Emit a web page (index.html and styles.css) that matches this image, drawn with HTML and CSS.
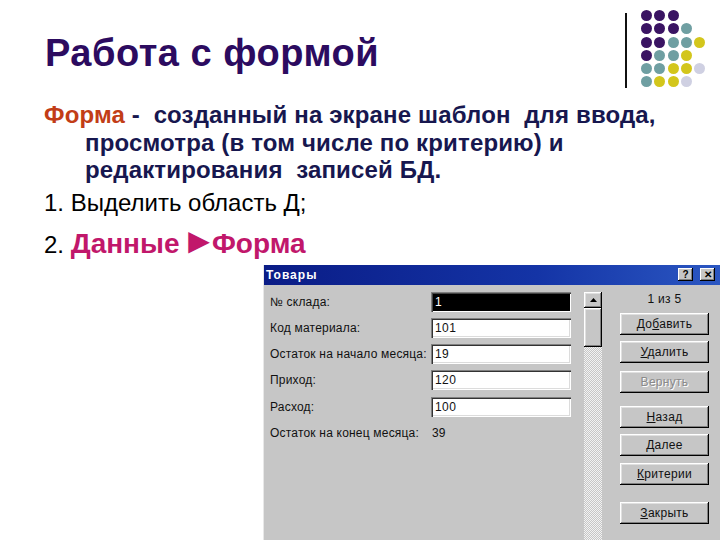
FILE: index.html
```html
<!DOCTYPE html>
<html lang="ru">
<head>
<meta charset="utf-8">
<title>Работа с формой</title>
<link rel="stylesheet" href="styles.css">
</head>
<body>
<div class="slide">
  <header class="head">
    <h1 class="title">Работа с формой</h1>
    <div class="deco">
      <div class="deco-line"></div>
      <div class="dots">
        <span class="d p"></span><span class="d p"></span><span class="d p"></span><span class="d n"></span><span class="d n"></span>
        <span class="d p"></span><span class="d p"></span><span class="d p"></span><span class="d t"></span><span class="d n"></span>
        <span class="d p"></span><span class="d p"></span><span class="d t"></span><span class="d t"></span><span class="d y"></span>
        <span class="d p"></span><span class="d t"></span><span class="d t"></span><span class="d y"></span><span class="d n"></span>
        <span class="d t"></span><span class="d t"></span><span class="d y"></span><span class="d y"></span><span class="d l"></span>
        <span class="d t"></span><span class="d y"></span><span class="d y"></span><span class="d l"></span><span class="d n"></span>
      </div>
    </div>
  </header>

  <p class="def"><span class="line1"><span class="term">Форма</span> -&nbsp; созданный на экране шаблон&nbsp; для ввода,</span> <span class="cont">просмотра (в том числе по критерию) и редактирования&nbsp; записей БД.</span></p>
  <p class="step s1">1. Выделить область Д;</p>
  <p class="step s2">2. <span class="menu">Данные <span class="arr">►</span>Форма</span></p>

  <div class="dialog">
    <div class="titlebar">
      <span class="caption">Товары</span>
      <span class="tb-btns">
        <span class="tb-btn">?</span>
        <span class="tb-btn tb-close">✕</span>
      </span>
    </div>
    <div class="dlg-body">
      <div class="fields">
        <label class="lbl">№ склада:</label><span class="inp sel">1</span>
        <label class="lbl">Код материала:</label><span class="inp">101</span>
        <label class="lbl">Остаток на начало месяца:</label><span class="inp">19</span>
        <label class="lbl">Приход:</label><span class="inp">120</span>
        <label class="lbl">Расход:</label><span class="inp">100</span>
        <label class="lbl">Остаток на конец месяца:</label><span class="val">39</span>
      </div>
      <div class="scroll">
        <div class="sb-up"><svg width="7" height="4" viewBox="0 0 7 4"><path d="M0 4 L3.5 0 L7 4 Z" fill="#000"/></svg></div>
        <div class="sb-thumb"></div>
        <div class="sb-track"></div>
      </div>
      <div class="actions">
        <div class="counter">1 из 5</div>
        <div class="btn">До<u>б</u>авить</div>
        <div class="btn"><u>У</u>далить</div>
        <div class="btn dis">Вернуть</div>
        <div class="btn"><u>Н</u>азад</div>
        <div class="btn"><u>Д</u>алее</div>
        <div class="btn"><u>К</u>ритерии</div>
        <div class="btn"><u>З</u>акрыть</div>
      </div>
    </div>
  </div>
</div>
</body>
</html>
```
FILE: styles.css
```css
* { box-sizing: border-box; }
html, body { margin: 0; padding: 0; background: #fff; }
.slide {
  width: 720px; height: 540px; overflow: hidden; background: #fff;
  font-family: "Liberation Sans", Arial, sans-serif;
  display: flex; flex-direction: column;
}
.head { display: flex; align-items: flex-start; padding: 10px 0 0 45px; height: 101px; flex: none; }
.title {
  margin: 21px 0 0 0; font-size: 38px; line-height: 44px; font-weight: bold; color: #2c0b60;
  letter-spacing: 0.5px;
}
.deco { margin-left: auto; margin-right: 15px; display: flex; align-items: flex-start; }
.deco-line { width: 2px; height: 75px; background: #111; margin: 3px 14px 0 0; }
.dots { display: grid; grid-template-columns: repeat(5, 11px); grid-auto-rows: 11px; gap: 2.3px 2.2px; }
.d { border-radius: 50%; }
.d.p { background: #3a1463; }
.d.t { background: #6f9fa2; }
.d.y { background: #d3c61c; }
.d.l { background: #cfd0e2; }
.d.n { background: transparent; }

.def {
  margin: 0; padding: 0 20px 0 44px; flex: none;
  font-size: 24px; line-height: 27.5px; font-weight: bold; color: #17174f; letter-spacing: 0.15px;
}
.line1 { display: block; white-space: nowrap; }
.cont { display: block; padding-left: 41px; }
.term { color: #c23d17; }
.step { margin: 0 0 0 44px; font-size: 24px; color: #000; flex: none; }
.s1 { margin-top: 5px; line-height: 28px; height: 28px; }
.s2 { margin-top: 9px; line-height: 30px; height: 30px; }
.menu { font-weight: bold; color: #c1176b; font-size: 28px; line-height: 30px; word-spacing: -6px; }
.arr { font-family: "Liberation Sans", Arial, sans-serif; font-size: 36px; font-weight: normal; line-height: 30px; letter-spacing: -5px; word-spacing: 0; }

.dialog {
  margin: 9px 0 0 263px; flex: 1; background: #c6c6c6;
  font-family: "Liberation Sans", Arial, sans-serif; font-size: 12px; color: #111;
  border-left: 1px solid #e8e8e8;
  display: flex; flex-direction: column;
}
.titlebar {
  height: 20px; display: flex; align-items: center; padding: 0 0 0 2px; flex: none;
  background: linear-gradient(90deg, #0a1c86 0%, #1434a6 60%, #2b57c2 100%);
}
.caption { color: #fff; font-weight: bold; font-size: 12px; letter-spacing: 1px; }
.tb-btns { margin-left: auto; display: flex; gap: 7px; margin-right: 5px; }
.tb-btn {
  width: 15px; height: 13px; background: #c6c6c6; font-size: 10px; font-weight: bold; line-height: 13px;
  text-align: center; color: #000;
  box-shadow: inset -1px -1px #000, inset 1px 1px #fff, inset -2px -2px #808080;
}
.dlg-body { display: flex; padding: 7px 0 0 6px; flex: 1; }
.fields {
  display: grid; grid-template-columns: 161px 140px; grid-auto-rows: 20px; row-gap: 6.25px;
  align-content: start; align-items: center; width: 301px;
}
.lbl { letter-spacing: 0.2px; white-space: nowrap; }
.inp {
  height: 20px; background: #fff; padding: 3px 0 0 4px; font-size: 12px; letter-spacing: 0.4px;
  box-shadow: inset 1px 1px #808080, inset 2px 2px #333, inset -1px -1px #fff, inset -2px -2px #dcdcdc;
}
.inp.sel { background: #000; color: #fff; box-shadow: inset 1px 1px #808080, inset 2px 2px #444, inset -1px -1px #fff; }
.val { padding-left: 1px; }
.scroll { width: 18px; margin-left: 13px; display: flex; flex-direction: column; }
.sb-up, .sb-thumb {
  background: #c6c6c6;
  box-shadow: inset -1px -1px #000, inset 1px 1px #fff, inset -2px -2px #808080, inset 2px 2px #e0e0e0;
}
.sb-up { height: 16px; display: flex; align-items: center; justify-content: center; }
.sb-thumb { height: 39px; }
.sb-track {
  flex: 1;
  background: repeating-conic-gradient(#f2f2f2 0 25%, #c6c6c6 0 50%) 0 0 / 2px 2px;
}
.actions { width: 89px; margin-left: 18px; display: flex; flex-direction: column; }
.counter { height: 14px; text-align: center; line-height: 14px; margin: 0 0 7px 0; letter-spacing: 0.3px; }
.btn {
  height: 22px; line-height: 22px; text-align: center; letter-spacing: 0.3px;
  box-shadow: inset -1px -1px #000, inset 1px 1px #fff, inset -2px -2px #808080, inset 2px 2px #e0e0e0;
}
.btn + .btn { margin-top: 6px; }
.btn:nth-child(4) { margin-top: 8px; }
.btn:nth-child(5) { margin-top: 13px; }
.btn:nth-child(7) { margin-top: 7px; }
.btn:nth-child(8) { margin-top: 17px; }
.btn.dis { color: #8a8a8a; text-shadow: 1px 1px #fff; }
```
